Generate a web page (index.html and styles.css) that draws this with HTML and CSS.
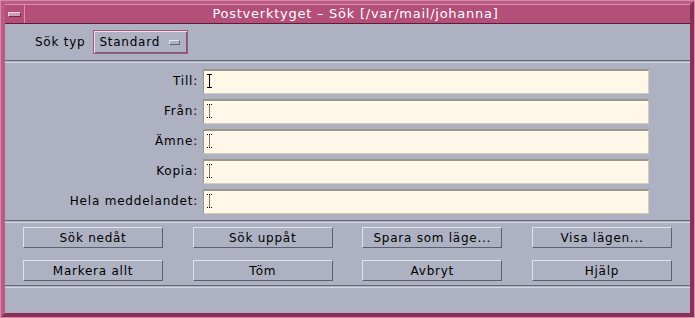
FILE: index.html
```html
<!DOCTYPE html>
<html lang="sv">
<head>
    <meta charset="UTF-8">
    <title>Postverktyget - Sök</title>
    <link rel="stylesheet" href="styles.css">
</head>
<body>
<div class="window">
    <!-- Title bar -->
    <div class="titlebar">
        <div class="menu-btn"><span class="menu-dash"></span></div>
        <div class="title">Postverktyget – Sök [/var/mail/johanna]</div>
    </div>

    <!-- Search type -->
    <div class="type-row">
        <span class="type-label">Sök typ</span>
        <div class="dropdown">
            <span>Standard</span>
            <span class="drop-ind"></span>
        </div>
    </div>
    <div class="sep"></div>

    <!-- Search fields -->
    <div class="fields">
        <label>Till:</label>
        <div class="field">
            <svg class="cursor" width="5" height="14" viewBox="0 0 5 14"><path d="M0 0.5h5M2.5 0.5v13M0 13.5h5" stroke="#000" fill="none"/></svg>
        </div>
        <label>Från:</label>
        <div class="field">
            <svg class="cursor" width="5" height="14" viewBox="0 0 5 14"><path d="M0 0.5h5M2.5 0.5v13M0 13.5h5" stroke="#000" stroke-dasharray="1 1" fill="none"/></svg>
        </div>
        <label>Ämne:</label>
        <div class="field">
            <svg class="cursor" width="5" height="14" viewBox="0 0 5 14"><path d="M0 0.5h5M2.5 0.5v13M0 13.5h5" stroke="#000" stroke-dasharray="1 1" fill="none"/></svg>
        </div>
        <label>Kopia:</label>
        <div class="field">
            <svg class="cursor" width="5" height="14" viewBox="0 0 5 14"><path d="M0 0.5h5M2.5 0.5v13M0 13.5h5" stroke="#000" stroke-dasharray="1 1" fill="none"/></svg>
        </div>
        <label>Hela meddelandet:</label>
        <div class="field">
            <svg class="cursor" width="5" height="14" viewBox="0 0 5 14"><path d="M0 0.5h5M2.5 0.5v13M0 13.5h5" stroke="#000" stroke-dasharray="1 1" fill="none"/></svg>
        </div>
    </div>
    <div class="sep sep-fields"></div>

    <!-- Buttons -->
    <div class="buttons">
        <button>Sök nedåt</button>
        <button>Sök uppåt</button>
        <button>Spara som läge...</button>
        <button>Visa lägen...</button>
        <button>Markera allt</button>
        <button>Töm</button>
        <button>Avbryt</button>
        <button>Hjälp</button>
    </div>
    <div class="sep sep-buttons"></div>

    <!-- Status line -->
    <div class="status"></div>
</div>
</body>
</html>
```

FILE: styles.css
```css
body {
    margin: 0;
    padding: 0;
    font-family: "DejaVu Sans", Verdana, sans-serif;
    font-size: 12px;
    letter-spacing: 0.75px;
    color: #000;
    background-color: #adb1c2;
}

.window {
    width: 695px;
    height: 318px;
    box-sizing: border-box;
    border: 5px solid #b44f79;
    border-top-color: #bb5a82;
    border-left-color: #bb5a82;
    border-right-color: #8a3058;
    border-bottom-color: #8a3058;
    outline: 1px solid #d78aa9;
    outline-offset: -1px;
    background-color: #adb1c2;
    display: flex;
    flex-direction: column;
}

.titlebar {
    display: flex;
    background-color: #b34f78;
    border-top: 1px solid #d98fae;
    border-bottom: 1px solid #5a1d3a;
    margin-top: -1px;
    box-sizing: border-box;
    height: 20px;
}

.menu-btn {
    width: 19px;
    border-right: 1px solid #d98fae;
    display: flex;
    align-items: center;
    justify-content: center;
}

.menu-dash {
    width: 11px;
    height: 3px;
    background-color: #c9a0b4;
    border: 1px solid #f0d6e2;
    border-right-color: #6e2a4a;
    border-bottom-color: #6e2a4a;
}

.title {
    flex: 1;
    text-align: center;
    color: #fff;
    font-size: 13px;
    line-height: 18px;
    padding-right: 4px;
}

.type-row {
    display: flex;
    align-items: center;
    height: 24px;
    margin-top: 6px;
    padding-left: 30px;
}

.type-label {
    margin-right: 8px;
}

.dropdown {
    width: 95px;
    height: 24px;
    box-sizing: border-box;
    border: 1px solid #b34f78;
    box-shadow: inset 1px 1px 0 #e3e5ec, inset -1px -1px 0 #61657a;
    display: flex;
    align-items: center;
    padding-left: 5px;
}

.drop-ind {
    width: 9px;
    height: 3px;
    margin-left: auto;
    margin-right: 7px;
    background-color: #adb1c2;
    border: 1px solid #e3e5ec;
    border-right-color: #61657a;
    border-bottom-color: #61657a;
}

.sep {
    height: 1px;
    border-top: 1px solid #666a78;
    border-bottom: 1px solid #d4d7e0;
    margin-top: 6px;
    flex-shrink: 0;
}

.fields {
    display: grid;
    grid-template-columns: 193px 446px;
    grid-auto-rows: 25px;
    column-gap: 5px;
    row-gap: 5px;
    margin-top: 6px;
}

.fields label {
    text-align: right;
    line-height: 25px;
    letter-spacing: 0.8px;
}

.field {
    background-color: #fff7e8;
    border: 1px solid #d2ccb8;
    border-top: 2px solid #9a9688;
    border-left-color: #9a9688;
    box-sizing: border-box;
    padding: 3px 0 0 3px;
}

.cursor {
    display: block;
}

.sep-fields {
    margin-top: 6px;
}

.buttons {
    display: grid;
    grid-template-columns: repeat(4, 140px);
    justify-content: space-between;
    row-gap: 12px;
    padding: 0 18px;
    margin-top: 4px;
}

.buttons button {
    height: 21px;
    padding: 0;
    font-family: "DejaVu Sans", Verdana, sans-serif;
    font-size: 12px;
    letter-spacing: 0.75px;
    color: #000;
    background-color: #adb1c2;
    border: 1px solid #e1e3ea;
    border-right-color: #5c6072;
    border-bottom-color: #5c6072;
    border-radius: 0;
}

.sep-buttons {
    margin-top: 4px;
}

.status {
    flex: 1;
}
```
